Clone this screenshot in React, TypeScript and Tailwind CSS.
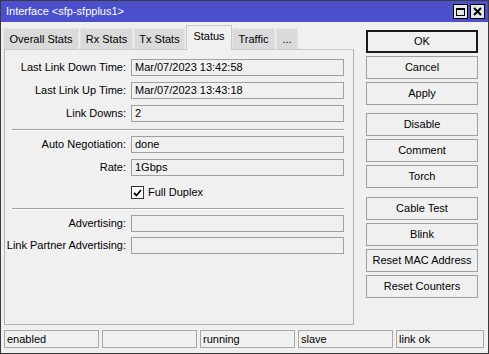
import React from "react";

const font = { fontFamily: '"Liberation Sans", Arial, sans-serif' };

const tabs = [
    { label: "Overall Stats", w: "w-[76px]" },
    { label: "Rx Stats", w: "w-[53px]" },
    { label: "Tx Stats", w: "w-[51px]" },
    { label: "Status", w: "w-[46px]", active: true },
    { label: "Traffic", w: "w-[43px]" },
    { label: "...", w: "w-[22px]" },
];

function Field({ label, value, className = "" }: { label: string; value?: string; className?: string }) {
    return (
        <div className={`flex items-center ${className}`}>
            <div className="w-[122px] text-right pr-px">{label}</div>
            <div className="ml-[4px] w-[213px] h-[17px] border border-[#a0a0a0] bg-[#f0f0f0] pl-[3px] leading-[15px]">
                {value}
            </div>
        </div>
    );
}

function Sep({ className = "" }: { className?: string }) {
    return <div className={`ml-[7px] w-[332px] h-[2px] border-t border-[#a0a0a0] border-b border-b-white ${className}`} />;
}

function Btn({ label, primary, className = "" }: { label: string; primary?: boolean; className?: string }) {
    return (
        <div
            className={`h-[23px] flex items-center justify-center bg-[#f0f0f0] ${
                primary ? "border-2 border-[#1a1a1a]" : "border border-[#a0a0a0]"
            } ${className}`}
        >
            {label}
        </div>
    );
}

export default function App() {
    const status = ["enabled", "", "running", "slave", "link ok"];
    return (
        <div style={font} className="w-[489px] h-[354px] border border-[#3a3a3a] bg-[#f0f0f0] flex flex-col text-[11px] text-black select-none">
            {/* title bar */}
            <div className="h-[21px] bg-[#4c50cc] flex items-center justify-between pl-[5px] pr-[3px] shrink-0">
                <span className="text-white text-[11px]">Interface &lt;sfp-sfpplus1&gt;</span>
                <div className="flex gap-[2px]">
                    <div className="w-[15px] h-[15px] border border-black bg-[#e6e6e6] flex items-center justify-center">
                        <div className="w-[9px] h-[8px] border border-black border-t-2" />
                    </div>
                    <div className="w-[15px] h-[15px] border border-black bg-[#e6e6e6] flex items-center justify-center">
                        <svg width="9" height="9" viewBox="0 0 9 9">
                            <path d="M1 1 L8 8 M8 1 L1 8" stroke="black" strokeWidth="2" />
                        </svg>
                    </div>
                </div>
            </div>

            <div className="flex h-[303px] shrink-0">
                {/* left: tabs + panel */}
                <div className="pl-[2px] w-[354px] flex flex-col">
                    <div className="flex items-end h-[27px] relative z-10">
                        {tabs.map((t) =>
                            t.active ? (
                                <div
                                    key={t.label}
                                    className={`${t.w} h-[25px] -mb-px bg-[#f0f0f0] border border-b-0 border-[#c8c8c8] flex items-center justify-center pb-[3px]`}
                                >
                                    {t.label}
                                </div>
                            ) : (
                                <div
                                    key={t.label}
                                    className={`${t.w} h-[21px] mr-[1px] bg-[#dadada] border border-b-0 border-[#e4e4e4] flex items-center justify-center`}
                                >
                                    {t.label}
                                </div>
                            )
                        )}
                    </div>
                    <div className="ml-px w-[350px] h-[276px] border border-[#b4b4b4] border-t-[#c8c8c8] pt-[9px] flex flex-col">
                        <Field label="Last Link Down Time:" value="Mar/07/2023 13:42:58" />
                        <Field label="Last Link Up Time:" value="Mar/07/2023 13:43:18" className="mt-[6px]" />
                        <Field label="Link Downs:" value="2" className="mt-[6px]" />
                        <Sep className="mt-[7px]" />
                        <Field label="Auto Negotiation:" value="done" className="mt-[5px]" />
                        <Field label="Rate:" value="1Gbps" className="mt-[6px]" />
                        <div className="flex items-center mt-[10px] h-[13px]">
                            <div className="ml-[126px] w-[13px] h-[13px] border border-[#333] bg-white flex items-center justify-center">
                                <svg width="9" height="8" viewBox="0 0 9 8">
                                    <path d="M1 4 L3.5 6.5 L8 1" stroke="black" strokeWidth="1.8" fill="none" />
                                </svg>
                            </div>
                            <span className="ml-[4px]">Full Duplex</span>
                        </div>
                        <Sep className="mt-[9px]" />
                        <Field label="Advertising:" className="mt-[5px]" />
                        <Field label="Link Partner Advertising:" className="mt-[5px]" />
                    </div>
                </div>

                {/* right: buttons */}
                <div className="ml-[11px] w-[112px] pt-[8px] flex flex-col">
                    <Btn label="OK" primary />
                    <Btn label="Cancel" className="mt-[3px]" />
                    <Btn label="Apply" className="mt-[3px]" />
                    <Btn label="Disable" className="mt-[8px]" />
                    <Btn label="Comment" className="mt-[3px]" />
                    <Btn label="Torch" className="mt-[3px]" />
                    <Btn label="Cable Test" className="mt-[9px]" />
                    <Btn label="Blink" className="mt-[3px]" />
                    <Btn label="Reset MAC Address" className="mt-[3px]" />
                    <Btn label="Reset Counters" className="mt-[3px]" />
                </div>
            </div>

            {/* status bar */}
            <div className="mt-[5px] h-[18px] flex gap-[3px] pl-[3px] pr-[4px] shrink-0">
                {status.map((s, i) => (
                    <div
                        key={i}
                        className={`${i < 4 ? "w-[95px]" : "flex-1"} h-[18px] border border-[#a8a8a8] pl-[2px] leading-[16px]`}
                    >
                        {s}
                    </div>
                ))}
            </div>
        </div>
    );
}
